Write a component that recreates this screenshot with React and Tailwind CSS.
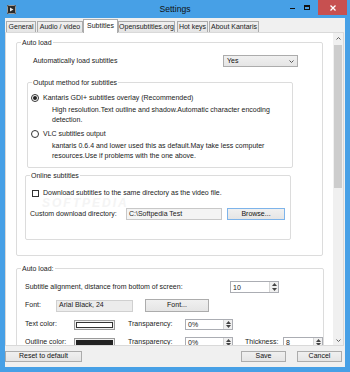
import React from 'react';

const btn = 'flex items-center justify-center border border-[#acacac] bg-gradient-to-b from-[#f0f0f0] to-[#e5e5e5] text-[#111]';

function GroupBox({ label, className = '', children }) {
    return (
        <fieldset className={`border border-[#dcdcdc] rounded-[2px] ${className}`}>
            <legend className="ml-[4px] px-[1px] leading-[9px] text-[#222]">{label}</legend>
            {children}
        </fieldset>
    );
}

function Spinner({ value, className = '' }) {
    return (
        <div className={`h-full flex border border-[#abadb3] bg-white ${className}`}>
            <div className="flex-1 pl-[2px] flex items-center leading-none">{value}</div>
            <div className="w-[9px] flex flex-col bg-[#f0f0f0] border-l border-[#d5d5d5]">
                <div className="flex-1 flex items-center justify-center">
                    <svg width="5" height="3" viewBox="0 0 5 3"><path d="M0 3L2.5 0L5 3Z" fill="#444" /></svg>
                </div>
                <div className="flex-1 flex items-center justify-center">
                    <svg width="5" height="3" viewBox="0 0 5 3"><path d="M0 0L2.5 3L5 0Z" fill="#444" /></svg>
                </div>
            </div>
        </div>
    );
}

function Tab({ label, className = '', selected }) {
    return selected ? (
        <div className={`relative z-10 h-[14px] -mb-[1px] bg-white border border-b-0 border-[#acacac] flex items-center justify-center ${className}`}>
            {label}
        </div>
    ) : (
        <div className={`h-[11px] bg-gradient-to-b from-[#f0f0f0] to-[#e5e5e5] border border-b-0 border-[#acacac] flex items-center justify-center ${className}`}>
            {label}
        </div>
    );
}

function Radio({ checked }) {
    return (
        <div className="w-[8px] h-[8px] rounded-full border border-[#333] bg-white flex items-center justify-center">
            {checked && <div className="w-[4px] h-[4px] rounded-full bg-[#222]" />}
        </div>
    );
}

export default function App() {
    return (
        <div className="w-[350px] h-[372px] bg-[#47a0e6] flex flex-col font-['Liberation_Sans',Arial,sans-serif] text-[7px] text-[#222] overflow-hidden">
            {/* title bar */}
            <div className="h-[18px] flex items-start">
                <div className="w-[150px] pl-[7px] pt-[5px]">
                    <svg width="9" height="9" viewBox="0 0 9 9">
                        <rect x="0" y="0" width="9" height="9" rx="1" fill="#2b2b2b" />
                        <rect x="0.5" y="0.5" width="8" height="8" rx="1" fill="none" stroke="#9a9a9a" strokeWidth="1" />
                        <path d="M3 2.5L6.5 4.5L3 6.5Z" fill="#e8e8e8" />
                    </svg>
                </div>
                <div className="flex-1 text-center pt-[4px] text-[8.6px] leading-[11px] text-[#111]">Settings</div>
                <div className="w-[150px] flex justify-end items-start">
                    <div className="w-[14px] h-[15px] flex items-center justify-center mr-[1px]">
                        <div className="w-[5px] h-[1px] bg-[#111] mt-[2px]" />
                    </div>
                    <div className="w-[14px] h-[15px] flex items-center justify-center mr-[4px]">
                        <div className="w-[6px] h-[5px] border border-t-2 border-[#111]" />
                    </div>
                    <div className="w-[29px] h-[15px] bg-[#c75050] flex items-center justify-center mr-[3px]">
                        <svg width="6" height="6" viewBox="0 0 6 6">
                            <path d="M0.5 0.5L5.5 5.5M5.5 0.5L0.5 5.5" stroke="#fff" strokeWidth="1.3" />
                        </svg>
                    </div>
                </div>
            </div>

            {/* client area */}
            <div className="mx-[5px] mb-[5px] flex-1 bg-[#f0f0f0] flex flex-col">
                {/* tabs */}
                <div className="h-[14px] pt-[1px] flex items-end pl-[1px]">
                    <Tab label="General" className="w-[30px]" />
                    <Tab label="Audio / video" className="w-[46px] ml-[1px]" />
                    <Tab label="Subtitles" selected className="w-[35px]" />
                    <Tab label="Opensubtitles.org" className="w-[57px]" />
                    <Tab label="Hot keys" className="w-[31px] ml-[2px]" />
                    <Tab label="About Kantaris" className="w-[50px] ml-[1px]" />
                </div>

                {/* tab page */}
                <div className="w-[339px] h-[314px] border border-[#d9d9d9] bg-white flex">
                    <div className="relative w-[327px] h-full overflow-hidden pt-[5px] pl-[10px]">
                        <div className="absolute left-[36px] top-[166px] text-[12px] leading-[9px] font-bold tracking-[2px] text-[#f4f4f4] italic select-none">SOFTPEDIA</div>

                        <GroupBox label="Auto load" className="relative w-[307px] pb-[15px]">
                            <div className="mt-[8px] h-[12px] flex items-center justify-between pl-[16px] pr-[24px]">
                                <span>Automatically load subtitles</span>
                                <div className={`${btn} w-[75px] h-full !justify-between px-[3px]`}>
                                    <span>Yes</span>
                                    <svg width="5" height="3" viewBox="0 0 5 3"><path d="M0.5 0.5L2.5 2.5L4.5 0.5" stroke="#555" fill="none" strokeWidth="1" /></svg>
                                </div>
                            </div>

                            <GroupBox label="Output method for subtitles" className="mt-[11px] ml-[10px] w-[266px] pb-[6px]">
                                <div className="mt-[6px] h-[10px] flex items-center pl-[3px] gap-[4px]">
                                    <Radio checked />
                                    <span>Kantaris GDI+ subtitles overlay (Recommended)</span>
                                </div>
                                <div className="mt-[2px] pl-[24px] leading-[10px]">
                                    <div>High resolution.Text outline and shadow.Automatic character encoding</div>
                                    <div>detection.</div>
                                </div>
                                <div className="mt-[4px] h-[10px] flex items-center pl-[3px] gap-[4px]">
                                    <Radio />
                                    <span>VLC subtitles output</span>
                                </div>
                                <div className="mt-[2px] pl-[24px] leading-[10px]">
                                    <div>kantaris 0.6.4 and lower used this as default.May take less computer</div>
                                    <div>resources.Use if problems with the one above.</div>
                                </div>
                            </GroupBox>

                            <GroupBox label="Online subtitles" className="mt-[3px] ml-[8px] w-[266px] pb-[19px]">
                                <div className="mt-[8px] h-[10px] flex items-center pl-[6px] gap-[4px]">
                                    <div className="w-[7px] h-[7px] border border-[#333] bg-white" />
                                    <span>Download subtitles to the same directory as the video file.</span>
                                </div>
                                <div className="mt-[10px] h-[12px] flex items-center pl-[4px]">
                                    <span className="w-[96px]">Custom download directory:</span>
                                    <div className="w-[96px] h-full border border-[#c8c8c8] bg-[#f4f4f4] flex items-center pl-[2px]">C:\Softpedia Test</div>
                                    <div className={`${btn} ml-[5px] w-[58px] h-full !border-[#7eb4ea]`}>Browse...</div>
                                </div>
                            </GroupBox>
                        </GroupBox>

                        <GroupBox label="Auto load:" className="mt-[8px] w-[307px] pb-[20px]">
                            <div className="mt-[8px] h-[12px] flex items-center pl-[8px]">
                                <span className="w-[205px]">Subtitle alignment, distance from bottom of screen:</span>
                                <Spinner value="10" className="w-[49px]" />
                            </div>
                            <div className="mt-[6px] h-[13px] flex items-center pl-[8px]">
                                <span className="w-[31px]">Font:</span>
                                <div className="w-[77px] h-[12px] border border-[#d0d0d0] bg-[#ececec] flex items-center pl-[2px]">Arial Black, 24</div>
                                <div className={`${btn} ml-[12px] w-[64px] h-full`}>Font...</div>
                            </div>
                            <div className="mt-[7px] h-[11px] flex items-center pl-[8px]">
                                <span className="w-[49px]">Text color:</span>
                                <div className="w-[41px] h-[10px] border border-[#9a9a9a] bg-[#f0f0f0] p-[1px]">
                                    <div className="w-full h-full border border-[#333] bg-white" />
                                </div>
                                <span className="ml-[13px] w-[57px]">Transparency:</span>
                                <Spinner value="0%" className="w-[48px]" />
                            </div>
                            <div className="mt-[7px] h-[11px] flex items-center pl-[8px]">
                                <span className="w-[49px]">Outline color:</span>
                                <div className="w-[41px] h-[10px] border border-[#9a9a9a] bg-[#f0f0f0] p-[1px]">
                                    <div className="w-full h-full bg-[#222]" />
                                </div>
                                <span className="ml-[13px] w-[57px]">Transparency:</span>
                                <Spinner value="0%" className="w-[48px]" />
                                <span className="ml-[12px] w-[38px]">Thickness:</span>
                                <Spinner value="8" className="w-[40px]" />
                            </div>
                        </GroupBox>
                    </div>

                    {/* scrollbar */}
                    <div className="w-[10px] h-full bg-[#f0f0f0] flex flex-col">
                        <div className="h-[10px] flex items-center justify-center">
                            <svg width="5" height="3" viewBox="0 0 5 3"><path d="M0.5 2.5L2.5 0.5L4.5 2.5" stroke="#606060" fill="none" strokeWidth="1" /></svg>
                        </div>
                        <div className="mt-[2px] mx-[1px] h-[143px] bg-[#cdcdcd]" />
                        <div className="flex-1" />
                        <div className="h-[10px] flex items-center justify-center">
                            <svg width="5" height="3" viewBox="0 0 5 3"><path d="M0.5 0.5L2.5 2.5L4.5 0.5" stroke="#606060" fill="none" strokeWidth="1" /></svg>
                        </div>
                    </div>
                </div>

                {/* bottom buttons */}
                <div className="flex-1 flex items-center">
                    <div className={`${btn} w-[77px] h-[11px]`}>Reset to default</div>
                    <div className="flex-1" />
                    <div className={`${btn} w-[45px] h-[11px]`}>Save</div>
                    <div className={`${btn} w-[45px] h-[11px] ml-[11px] mr-[3px]`}>Cancel</div>
                </div>
            </div>
        </div>
    );
}
